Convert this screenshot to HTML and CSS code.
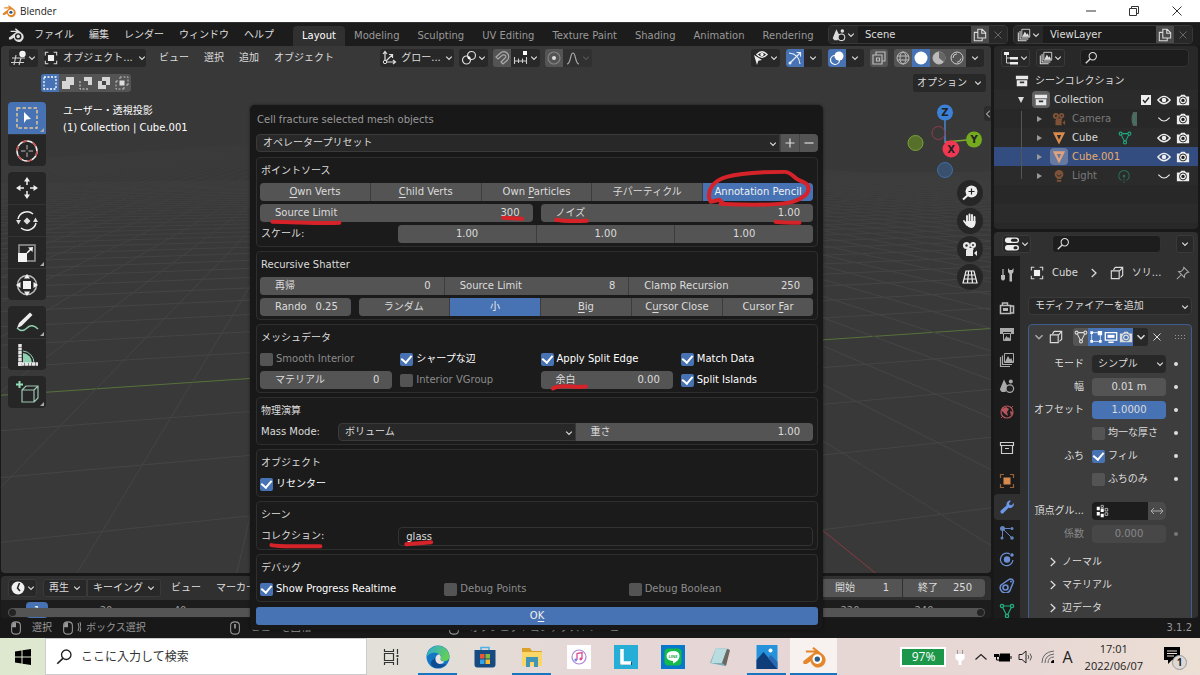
FILE: index.html
```html
<!DOCTYPE html>
<html lang="ja">
<head>
  <meta charset="UTF-8">
  <meta name="viewport" content="width=device-width, initial-scale=1.0">
  <title>Blender</title>
  <link rel="stylesheet" href="styles.css">
</head>
<body>

<!-- shared icons -->
<svg class="sprite" aria-hidden="true">
  <symbol id="down" viewBox="0 0 8 8"><path d="M1.2 2.6 4 5.4l2.8-2.8" fill="none" stroke="currentColor" stroke-width="1.2"/></symbol>
  <symbol id="right" viewBox="0 0 8 8"><path d="M2.2.8 5.6 4 2.2 7.2" fill="none" stroke="currentColor" stroke-width="1"/></symbol>
  <symbol id="cross" viewBox="0 0 8 8"><path d="m.5.5 7 7m0-7-7 7" stroke="currentColor" stroke-width="1"/></symbol>
  <symbol id="search" viewBox="0 0 16 16"><circle cx="10" cy="6" r="4.2" fill="none" stroke="currentColor" stroke-width="1.2"/><path d="M7 9.2 2 14" stroke="currentColor" stroke-width="1.5"/></symbol>
  <symbol id="blender" viewBox="0 0 16 16"><path d="M.8 10.8 8.2 5H2.6V3.7h6L6.8 2.3l1-1 5.6 4.5a5 5 0 1 1-7.6 5L3 12.6H1z" fill="currentColor"/><circle cx="10.2" cy="9.4" r="3.2" fill="var(--hole)"/><circle cx="10.2" cy="9.4" r="1.8" fill="var(--pupil)"/></symbol>
  <symbol id="copy" viewBox="0 0 16 16"><path d="M5.5 1.5h5l4 4v6h-9zM10 1.5V6h4.500M5.500 5H1.500v9.500h9v-3" fill="none" stroke="currentColor" stroke-width="1.2"/></symbol>
  <symbol id="scene" viewBox="0 0 16 16"><path d="M5 1.5 8.3 8 6.5 14H2.7L.8 11.6z" fill="currentColor"/><circle cx="11.8" cy="3.4" r="2" fill="currentColor"/><circle cx="10.8" cy="10.6" r="3.8" fill="#222" stroke="currentColor" stroke-width="1.2"/></symbol>
  <symbol id="images" viewBox="0 0 16 16"><path d="M1.5 5v9.5H11M3.5 3.5v9H13" fill="none" stroke="currentColor" stroke-width="1.2"/><path d="M5.5 1.5h9v9h-9z" fill="none" stroke="currentColor"/><path d="m6 10 3-6 2 3.5L12.200 6 14 10z" fill="currentColor"/></symbol>
  <symbol id="object" viewBox="0 0 16 16"><path d="M4.500 4.500h7v7h-7z" fill="var(--fill,#f0f0f0)"/><path d="M5 1.500H1.500V5M11 1.500h3.500V5M14.500 11v3.500H11M5 14.500H1.500V11" fill="none" stroke="currentColor" stroke-width="1.2"/></symbol>
  <symbol id="archive" viewBox="0 0 16 16"><path d="M1 2h14v4H1zM2 7h12v7H2z" fill="currentColor"/><path d="M5.500 8.500h5v2h-5z" fill="#333"/></symbol>
  <symbol id="eye" viewBox="0 0 16 16"><path d="M1 8q7-8.500 14 0-7 8.500-14 0z" fill="none" stroke="currentColor" stroke-width="1.500"/><circle cx="8" cy="8" r="2.600" fill="currentColor"/></symbol>
  <symbol id="closed" viewBox="0 0 16 16"><path d="M1.500 6.500q6.500 7.500 13 0" fill="none" stroke="currentColor" stroke-width="1.200"/></symbol>
  <symbol id="camera" viewBox="0 0 16 16"><path d="M1 4h3.500L6 2h4l1.500 2H15v10H1z" fill="currentColor"/><circle cx="8" cy="8.500" r="4" fill="none" stroke="var(--lens,#222)" stroke-width="1.100"/><circle cx="8" cy="8.500" r="1.900" fill="var(--lens,#222)"/></symbol>
  <symbol id="movie" viewBox="0 0 16 16"><circle cx="4.500" cy="4.500" r="3.500" fill="currentColor"/><circle cx="11" cy="4" r="3" fill="currentColor"/><path d="M4 9h7v6H4zM12 12l3-2.500v5.500zM4.500 7h7v2h-7z" fill="currentColor"/><circle cx="4.500" cy="4.500" r="1.200" fill="#2a2a2a"/><circle cx="11" cy="4" r="1" fill="#2a2a2a"/></symbol>
  <symbol id="mesh" viewBox="0 0 16 16"><path d="M1 1.500h14L8 15.500zM5.500 4.500 8 10l2.500-5.500z" fill-rule="evenodd" fill="currentColor"/></symbol>
  <symbol id="meshdata" viewBox="0 0 16 16"><path d="M3 3h10L8 13z" fill="none" stroke="currentColor" stroke-width="1.200"/><g fill="var(--node,#2a2a2a)" stroke="currentColor" stroke-width="1.200"><circle cx="3" cy="3" r="1.700"/><circle cx="13" cy="3" r="1.700"/><circle cx="8" cy="13" r="1.700"/></g></symbol>
  <symbol id="modicon" viewBox="0 0 16 16"><path d="M1.500 5.500h9v9h-9zM4 4.500 6 1.500h8.500v9L12 13M14.500 1.500 11 5.500" fill="none" stroke="currentColor" stroke-width="1.300"/></symbol>
  <symbol id="mouse" viewBox="0 0 16 16"><path d="M3 5q0-4 5-4t5 4v6q0 4-5 4t-5-4z" fill="none" stroke="currentColor" stroke-width="1.200"/><path d="M3.500 7V4Q4.500 1.500 8 1.500V7z" fill="currentColor"/></symbol>
  <symbol id="wheel" viewBox="0 0 16 16"><path d="M3 5q0-4 5-4t5 4v6q0 4-5 4t-5-4z" fill="none" stroke="currentColor" stroke-width="1.200"/><path d="M7 3.500h2v5H7z" fill="currentColor"/></symbol>
</svg>

<header class="titlebar">
  <svg class="i14 orange" aria-hidden="true"><use href="#blender"/></svg>
  <span class="caption">Blender</span>
  <button class="winbtn" aria-label="最小化"><svg class="i10" viewBox="0 0 10 10"><path d="M0 5h10" stroke="#333"/></svg></button>
  <button class="winbtn" aria-label="元に戻す"><svg class="i10" viewBox="0 0 10 10"><path d="M.5 2.500h7v7h-7zM2.500 2.500v-2h7v7h-2" fill="none" stroke="#333"/></svg></button>
  <button class="winbtn" aria-label="閉じる"><svg class="i10" viewBox="0 0 10 10"><path d="m.5.5 9 9m0-9-9 9" stroke="#333"/></svg></button>
</header>

<nav class="topbar">
  <svg class="i16 logo" aria-hidden="true"><use href="#blender"/></svg>
  <div class="menus">
    <button>ファイル</button><button>編集</button><button>レンダー</button><button>ウィンドウ</button><button>ヘルプ</button>
  </div>
  <div class="workspaces">
    <button class="active">Layout</button><button>Modeling</button><button>Sculpting</button><button>UV Editing</button><button>Texture Paint</button><button>Shading</button><button>Animation</button><button>Rendering</button>
  </div>
  <div class="idblock">
    <button class="icon" aria-label="シーン"><svg class="i14"><use href="#scene"/></svg><svg class="i8"><use href="#down"/></svg></button>
    <input type="text" value="Scene" aria-label="シーン名">
    <button class="light" aria-label="新規シーン"><svg class="i14"><use href="#copy"/></svg></button>
    <button class="off" aria-label="削除"><svg class="i8"><use href="#cross"/></svg></button>
  </div>
  <div class="idblock">
    <button class="icon" aria-label="ビューレイヤー"><svg class="i14"><use href="#images"/></svg><svg class="i8"><use href="#down"/></svg></button>
    <input type="text" value="ViewLayer" aria-label="レイヤー名">
    <button class="light" aria-label="新規レイヤー"><svg class="i14"><use href="#copy"/></svg></button>
    <button class="off" aria-label="削除"><svg class="i8"><use href="#cross"/></svg></button>
  </div>
</nav>

<main class="editors">
  <div class="left">
    <section class="viewport">
      <svg class="floor" viewBox="1 46 990 527" preserveAspectRatio="xMinYMin slice" aria-hidden="true">
        <defs><linearGradient id="fade" x1="0" y1="0" x2="0" y2="1"><stop offset="0" stop-color="#383838"/><stop offset=".4" stop-color="#383838" stop-opacity=".9"/><stop offset="1" stop-color="#393939" stop-opacity="0"/></linearGradient></defs>
        <g id="grid"></g>
        <rect x="0" y="46" width="1400" height="230" fill="url(#fade)"/>
      </svg>

      <div class="viewhead">
        <button class="w pair" aria-label="エディタータイプ"><svg class="i16" viewBox="0 0 16 16"><path d="M1 8h13M0 12.500h13M5 5 3 15M10 8 8 15" stroke="#d0d0d0" stroke-width="1.100"/><circle cx="11.500" cy="4" r="3.200" fill="#f2f2f2"/></svg><svg class="i8"><use href="#down"/></svg></button>
        <button class="w mode"><svg class="i14"><use href="#object"/></svg><span>オブジェクト...</span><svg class="i8"><use href="#down"/></svg></button>
        <div class="menus view"><button>ビュー</button><button>選択</button><button>追加</button><button>オブジェクト</button></div>
        <div class="group transform">
          <button class="w orient"><svg class="i16" viewBox="0 0 16 16"><path d="M4 2v10h10M4 12l7-7M2 4l2-2.500L6 4M12 10l2.500 2-2.500 2M8 4.500h3.500V8" fill="none" stroke="#ddd" stroke-width="1.200"/><circle cx="4" cy="12" r="1.700" fill="#282828" stroke="#ddd"/></svg><span>グロー...</span><svg class="i8"><use href="#down"/></svg></button>
          <button class="w pair" aria-label="ピボット"><svg class="i16" viewBox="0 0 16 16"><circle cx="5.500" cy="10" r="4" fill="none" stroke="#ddd" stroke-width="1.200"/><circle cx="10.500" cy="5.500" r="4" fill="none" stroke="#ddd" stroke-width="1.200"/><circle cx="8" cy="8" r="1.300" fill="#fff"/></svg><svg class="i8"><use href="#down"/></svg></button>
          <div class="joined">
            <button class="w gray" aria-label="スナップ"><svg class="i16" viewBox="0 0 16 16"><path d="m2 7 5-4.500q4-2 6.500 1t0 6.500L9 14l-2-2 4-4q1.500-1.600.4-2.600T8.500 5L4 9z" fill="none" stroke="#aaa" stroke-width="1.200"/></svg></button>
            <button class="w pair" aria-label="スナップ先"><svg class="i16" viewBox="0 0 16 16"><path d="M1.500 7v7M5.500 8.500V13M9.500 8.500V13M13.500 7v7M1.500 11h12" stroke="#ccc" stroke-width="1.100"/><path d="M10 1h4v4h-4z" fill="#fff"/></svg><svg class="i8"><use href="#down"/></svg></button>
          </div>
          <div class="joined">
            <button class="w gray" aria-label="プロポーショナル編集"><svg class="i16" viewBox="0 0 16 16"><circle cx="8" cy="8" r="6" fill="none" stroke="#828282" stroke-width="1.200"/><circle cx="8" cy="8" r="2" fill="#ddd"/></svg></button>
            <button class="w pair dim" aria-label="減衰"><svg class="i16" viewBox="0 0 16 16"><path d="M2 14c4 0 3-11 6-11s2 11 6 11" fill="none" stroke="#aaa" stroke-width="1.200"/></svg><svg class="i8 faint"><use href="#down"/></svg></button>
          </div>
        </div>
        <div class="group display">
          <button class="w pair" aria-label="可視性"><svg class="i16" viewBox="0 0 16 16"><path d="M4 4.500q5-5.500 10 0-5 5.500-10 0z" fill="none" stroke="#eee" stroke-width="1.500"/><circle cx="9" cy="4.500" r="1.700" fill="#eee"/><path d="m1 5 8 5-3.700.8L4 15z" fill="#eee"/></svg><svg class="i8"><use href="#down"/></svg></button>
          <div class="joined">
            <button class="w blue" aria-label="ギズモ"><svg class="i16" viewBox="0 0 16 16"><path d="M2 3q10 1 11 11M3 13 13 3M9.500 2.500h4v4" fill="none" stroke="#e8eefc" stroke-width="1.200"/><circle cx="3" cy="13" r="1.500" fill="#e8eefc"/></svg></button>
            <button class="w" aria-label="ギズモ設定"><svg class="i8"><use href="#down"/></svg></button>
          </div>
          <div class="joined">
            <button class="w blue" aria-label="オーバーレイ"><svg class="i16" viewBox="0 0 16 16"><circle cx="10" cy="6" r="4.500" fill="#fff"/><circle cx="6" cy="10" r="4.500" fill="none" stroke="#fff" stroke-width="1.200"/></svg></button>
            <button class="w" aria-label="オーバーレイ設定"><svg class="i8"><use href="#down"/></svg></button>
          </div>
          <button class="w gray" aria-label="透過"><svg class="i16" viewBox="0 0 16 16"><path d="M2 5h9v9H2zM5 5V2h9v9h-3M5.500 8h3v3h-3z" fill="none" stroke="#bbb" stroke-width="1.200"/></svg></button>
          <div class="joined">
            <button class="w gray" aria-label="ワイヤーフレーム"><svg class="i16" viewBox="0 0 16 16"><circle cx="8" cy="8" r="6" fill="none" stroke="#bbb"/><ellipse cx="8" cy="8" rx="3" ry="6" fill="none" stroke="#bbb"/><path d="M2 6h12M2 10h12" stroke="#bbb"/></svg></button>
            <button class="w blue" aria-label="ソリッド"><svg class="i16" viewBox="0 0 16 16"><circle cx="8" cy="8" r="6.500" fill="#fff"/></svg></button>
            <button class="w gray" aria-label="マテリアル"><svg class="i16" viewBox="0 0 16 16"><circle cx="8" cy="8" r="6" fill="#bbb" stroke="#bbb"/><path d="M8 2v6l5 4A6 6 0 0 0 8 2z" fill="#666"/></svg></button>
            <button class="w gray" aria-label="レンダー"><svg class="i16" viewBox="0 0 16 16"><circle cx="8" cy="8" r="6" fill="none" stroke="#ccc"/><path d="M4 8q0-4 4-4.200M12 8.500Q11.500 12 8 12.300" fill="none" stroke="#ccc"/></svg></button>
            <button class="w" aria-label="シェーディング設定"><svg class="i8"><use href="#down"/></svg></button>
          </div>
        </div>
      </div>

      <div class="toolhead">
        <div class="joined selectmodes">
          <button class="w blue" aria-label="新規"><svg class="i16" viewBox="0 0 16 16"><path d="M2 2h12v12H2z" fill="none" stroke="#fff" stroke-width="1.300" stroke-dasharray="2 1.500"/></svg></button>
          <button class="w gray" aria-label="拡張"><svg class="i16" viewBox="0 0 16 16"><path d="M6 2h8v8h-4v4H2V6h4z" fill="#d5d5d5"/></svg></button>
          <button class="w gray" aria-label="減算"><svg class="i16" viewBox="0 0 16 16"><path d="M6 2h8v8h-4V6H6z" fill="#d5d5d5"/><path d="M2 6v8h8" fill="none" stroke="#d5d5d5" stroke-dasharray="2 1.500"/></svg></button>
          <button class="w gray" aria-label="差分"><svg class="i16" viewBox="0 0 16 16"><path d="M6 2h8v8h-4v4H2V6h4z" fill="#d5d5d5"/><path d="M6 6h4v4H6z" fill="#444"/></svg></button>
          <button class="w gray" aria-label="交差"><svg class="i16" viewBox="0 0 16 16"><path d="M2 6v8h8M6 2h8v8M2 6h3M6 2v3M10 14v-3M14 10h-3" fill="none" stroke="#bbb" stroke-dasharray="2 1.500"/><path d="M5.500 5.500h5v5h-5z" fill="#ddd"/></svg></button>
        </div>
        <button class="w options"><span>オプション</span><svg class="i8"><use href="#down"/></svg></button>
      </div>

      <div class="stage">
        <div class="toolbar">
          <div class="tools">
            <button class="on corner" aria-label="選択"><svg class="i24" viewBox="0 0 24 24"><path d="M2 2h20v20H2z" fill="none" stroke="#e3c799" stroke-width="1.500" stroke-dasharray="3.500 2"/><path d="m9 6 7 7-4.500.5L9 17z" fill="#fff"/></svg></button>
            <button aria-label="カーソル"><svg class="i24" viewBox="0 0 24 24"><circle cx="12" cy="12" r="10" fill="none" stroke="#eee" stroke-width="1.500"/><circle cx="12" cy="12" r="10" fill="none" stroke="#c54a4a" stroke-width="1.500" stroke-dasharray="5 5.500"/><path d="M12 6v4.500M12 13.500V18M6 12h4.500M13.500 12H18" stroke="#bbb"/></svg></button>
          </div>
          <div class="tools">
            <button aria-label="移動"><svg class="i24" viewBox="0 0 24 24"><path d="m12 1 3 4.500H9zM12 23l3-4.500H9zM1 12l4.500-3v6zM23 12l-4.500-3v6z" fill="#eee"/><path d="M12 5v4M12 15v4M5 12h4M15 12h4" stroke="#eee" stroke-width="1.500"/></svg></button>
            <button aria-label="回転"><svg class="i24" viewBox="0 0 24 24"><path d="M3 10a9.300 9.300 0 0 1 15-5M21 14a9.300 9.300 0 0 1-15 5" fill="none" stroke="#eee" stroke-width="1.500"/><path d="M1 11h5l-2.500 4.500zM18 13h5l-2.500-4.500zM12 8.500l3.500 3.500-3.500 3.500L8.500 12z" fill="#ddd"/></svg></button>
            <button class="corner" aria-label="スケール"><svg class="i24" viewBox="0 0 24 24"><path d="M4 12V4h16v16h-8" fill="none" stroke="#999" stroke-width="1.500"/><path d="M3 12h9v9H3zM18 6l-.5 5-4.500-4.500z" fill="#f2f2f2"/><path d="m12 12 4-4" stroke="#fff" stroke-width="1.500"/></svg></button>
            <button aria-label="トランスフォーム"><svg class="i24" viewBox="0 0 24 24"><circle cx="12" cy="12" r="9.500" fill="none" stroke="#bbb" stroke-width="1.500"/><path d="M8 8h8v8H8zM12 1l3 4.500H9zM12 23l3-4.500H9zM1 12l4.500-3v6zM23 12l-4.500-3v6z" fill="#f2f2f2"/></svg></button>
          </div>
          <div class="tools">
            <button class="corner" aria-label="アノテート"><svg class="i24" viewBox="0 0 24 24"><path d="M15 2.500 4 13l-2 5 4.500-2L17.500 5z" fill="#eee"/><path d="M2 18q5 5 10 0t11 1" fill="none" stroke="#8fd0b0" stroke-width="1.500"/></svg></button>
            <button aria-label="メジャー"><svg class="i24" viewBox="0 0 24 24"><path d="M8 20V10a10 10 0 0 1 9 10z" fill="#8fd0b0"/><path d="M8 8a12 12 0 0 1 11 12" fill="none" stroke="#8fd0b0"/><path d="M5 1v22M3 21h20" stroke="#e5e5e5" stroke-width="3.500" stroke-dasharray="3 .5"/></svg></button>
          </div>
          <div class="tools">
            <button class="corner" aria-label="立方体を追加"><svg class="i24" viewBox="0 0 24 24"><path d="M7 10h12v12H7zM7 10l4-4h12v12l-4 4M19 10l4-4" fill="none" stroke="#9cc4b0" stroke-width="1.200"/><path d="M4.500 1v7M1 4.500h7" stroke="#92dcb6" stroke-width="2"/></svg></button>
          </div>
        </div>
        <div class="viewinfo">ユーザー・透視投影<br>(1) Collection | Cube.001</div>
        <div class="navigate">
          <svg class="gizmo" viewBox="902 102 82 78">
            <path d="M945 120v23" stroke="#4a86cc" stroke-width="1.500"/><path d="m945 142 22-2" stroke="#7fae2c" stroke-width="1.500"/><path d="m946 141 5 8" stroke="#f23a58" stroke-width="1.500"/>
            <circle cx="938.500" cy="133" r="6.500" fill="none" stroke="#8f3d4c"/>
            <circle cx="915.500" cy="143" r="7.500" fill="#56702b" stroke="#7ba332"/>
            <circle cx="945" cy="170" r="7.500" fill="#39506c" stroke="#3a6fab"/>
            <circle cx="945" cy="112.500" r="8" fill="#3b81d8"/><circle cx="974" cy="139.500" r="8" fill="#75aa1f"/><circle cx="951" cy="149" r="8.500" fill="#f23753"/>
            <g class="axis"><text x="945" y="116">Z</text><text x="974" y="143">Y</text><text x="951" y="153">X</text></g>
          </svg>
          <div class="navbtns">
            <button aria-label="ズーム"><svg class="i16" viewBox="0 0 16 16"><circle cx="9.500" cy="6.500" r="6" fill="#eee"/><path d="M6 10 1 14.500" stroke="#eee" stroke-width="2"/><path d="M9.500 3.500v6M6.500 6.500h6" stroke="#222" stroke-width="1.200"/></svg></button>
            <button aria-label="移動"><svg class="i16" viewBox="0 0 16 16"><path d="M5 9V3M7.500 8V1.500M10 8V2M12.500 9V4M2 8l3 4" stroke="#eee" stroke-width="1.900" stroke-linecap="round"/><path d="M4 8h9.500v2.500Q12.500 15 9 15q-2.500 0-5-3.500z" fill="#eee"/></svg></button>
            <button aria-label="カメラ"><svg class="i16 white"><use href="#movie"/></svg></button>
            <button aria-label="透視投影"><svg class="i16" viewBox="0 0 16 16"><path d="M4 2h8l3 12H1zM2.800 6h10.400M2 10h12M6.600 2 5.500 14M9.400 2l1.100 12" fill="none" stroke="#eee" stroke-width="1.200"/></svg></button>
          </div>
        </div>
        <button class="npanel" aria-label="サイドバー"><svg class="i8 flip"><use href="#right"/></svg></button>
      </div>
    </section>

    <section class="timeline">
      <div class="timehead">
        <button class="w pair outlined" aria-label="タイムライン"><svg class="i16" viewBox="0 0 16 16"><circle cx="8" cy="8" r="6.500" fill="#f0f0f0"/><path d="M9.500 3 7.500 8l2.500 3" fill="none" stroke="#222" stroke-width="1.500"/></svg><svg class="i8"><use href="#down"/></svg></button>
        <div class="joined playback">
          <button class="w outlined"><span>再生</span><svg class="i8"><use href="#down"/></svg></button>
          <button class="w outlined"><span>キーイング</span><svg class="i8"><use href="#down"/></svg></button>
        </div>
        <div class="menus"><button>ビュー</button><button>マーカー</button></div>
        <div class="joined range">
          <label class="field"><span>開始</span><input type="text" value="1"></label>
          <label class="field"><span>終了</span><input type="text" value="250"></label>
        </div>
      </div>
      <div class="ruler">
        <span class="now">1</span><span>20</span><span>40</span><span class="late">220</span><span>240</span>
        <div class="scroll"></div>
      </div>
    </section>
  </div>

  <aside class="right">
    <section class="outliner">
      <div class="sidehead">
        <button class="w pair outlined" aria-label="アウトライナー"><svg class="i16" viewBox="0 0 16 16"><path d="M1 2h5v3H1zM7 7h8v2.500H7zM7 12h8v2.500H7z" fill="#eee"/><path d="M3.500 5v8H7M3.500 8H7" fill="none" stroke="#ccc"/></svg><svg class="i8"><use href="#down"/></svg></button>
        <button class="w pair outlined" aria-label="表示モード"><svg class="i14"><use href="#images"/></svg><svg class="i8"><use href="#down"/></svg></button>
        <label class="find"><svg class="i14"><use href="#search"/></svg><input type="search" aria-label="検索"></label>
      </div>
      <ul class="tree">
        <li class="root"><svg class="i14 white"><use href="#archive"/></svg><span>シーンコレクション</span></li>
        <li class="coll"><i class="tri open"></i><b class="chip"><svg class="i14 white"><use href="#archive"/></svg></b><span>Collection</span>
          <em><svg class="i12" viewBox="0 0 12 12"><path d="M1 1h10v10H1z" fill="#eee"/><path d="m3 6 2 2.500L9 3.500" fill="none" stroke="#222" stroke-width="1.300"/></svg><svg class="i14"><use href="#eye"/></svg><svg class="i14"><use href="#camera"/></svg></em></li>
        <li class="child muted"><i class="tri"></i><b><svg class="i14 brown"><use href="#movie"/></svg></b><span>Camera</span><svg class="i14 data cut" viewBox="0 0 14 14"><path d="M10 0h4v14h-4q-3-7 0-14z" fill="#56605c"/><path d="M14 3h-3v8h3" fill="none" stroke="#2b8569"/></svg>
          <em><svg class="i14"><use href="#closed"/></svg><svg class="i14"><use href="#camera"/></svg></em></li>
        <li class="child"><i class="tri"></i><b><svg class="i14 amber"><use href="#mesh"/></svg></b><span>Cube</span><svg class="i14 data green"><use href="#meshdata"/></svg>
          <em><svg class="i14"><use href="#eye"/></svg><svg class="i14"><use href="#camera"/></svg></em></li>
        <li class="child selected"><i class="tri"></i><b class="chip"><svg class="i14 amber"><use href="#mesh"/></svg></b><span>Cube.001</span>
          <em><svg class="i14"><use href="#eye"/></svg><svg class="i14"><use href="#camera"/></svg></em></li>
        <li class="child muted"><i class="tri"></i><b><svg class="i14 brown" viewBox="0 0 16 16"><circle cx="8" cy="6" r="5" fill="currentColor"/><path d="M5.500 10h5v4.500h-5z" fill="currentColor"/><path d="M5.500 6 7 8h2l1.500-2M5.500 12h5" fill="none" stroke="#2a2a2a"/></svg></b><span>Light</span><svg class="i14 data green" viewBox="0 0 16 16"><path d="M5 13a6 6 0 1 1 6 0" fill="none" stroke="#27705a" stroke-width="1.200"/><circle cx="8" cy="8" r="1.500" fill="#27705a"/><path d="M8 8v8" stroke="#27705a" stroke-dasharray="2 1"/></svg>
          <em><svg class="i14"><use href="#closed"/></svg><svg class="i14"><use href="#camera"/></svg></em></li>
        <li></li><li></li>
      </ul>
    </section>

    <section class="properties">
      <div class="sidehead props">
        <button class="w pair outlined" aria-label="プロパティ"><svg class="i16" viewBox="0 0 16 16"><rect x="1" y="1.500" width="14" height="5.500" rx="2.700" fill="#eee"/><rect x="1" y="9" width="14" height="5.500" rx="2.700" fill="#eee"/><rect x="7" y="2.700" width="6.500" height="3" rx="1.500" fill="#222"/><rect x="9.500" y="10.200" width="4" height="3" rx="1.500" fill="#222"/></svg><svg class="i8"><use href="#down"/></svg></button>
        <label class="find"><svg class="i14"><use href="#search"/></svg><input type="search" aria-label="プロパティ検索"></label>
        <button class="w outlined" aria-label="オプション"><svg class="i8"><use href="#down"/></svg></button>
      </div>
      <div class="propbody">
        <div class="tabs">
          <button aria-label="ツール"><svg class="i16" viewBox="0 0 16 16"><path d="M4 2v6" stroke="#bbb" stroke-width="1.200"/><path d="M2 8h4v4q-2 3-4 0zM9 1v4l1.500 2v7.500h2.500V7L14.500 5V1l-1.500 2h-2.500z" fill="#bbb"/></svg></button>
          <button class="gap" aria-label="レンダー"><svg class="i16" viewBox="0 0 16 16"><path d="M1.500 5.500h10v8h-10zM11.500 6h3v7h-3M3.500 5V3h5v2" fill="none" stroke="#bbb" stroke-width="1.500"/><path d="M4 8h5v3H4z" fill="#bbb"/></svg></button>
          <button aria-label="出力"><svg class="i16" viewBox="0 0 16 16"><path d="M1 2h14v6h-3V6H4v2H1z" fill="#aaa"/><path d="M4.500 7.500h7v7h-7z" fill="none" stroke="#aaa"/><path d="m5 14 2.500-4 1.500 2 1-1 1.500 3z" fill="#aaa"/></svg></button>
          <button aria-label="ビューレイヤー"><svg class="i16 soft"><use href="#images"/></svg></button>
          <button aria-label="シーン"><svg class="i16 soft"><use href="#scene"/></svg></button>
          <button aria-label="ワールド"><svg class="i16" viewBox="0 0 16 16"><circle cx="8" cy="8" r="6" fill="none" stroke="#b5545c" stroke-width="1.200"/><path d="m3 5 4-2 3 2-2 3 1 4-3-2-3-3zM11 7l3 1-2 4z" fill="#b5545c"/><path d="m12 4 2-2M4 12l-2 2" stroke="#b5545c"/></svg></button>
          <button class="gap2" aria-label="コレクション"><svg class="i16" viewBox="0 0 16 16"><path d="M1.500 2.500h13v3h-13zM2.500 5.500h11v8h-11zM6 8.500h4" fill="none" stroke="#ccc" stroke-width="1.200"/></svg></button>
          <button class="gap" aria-label="オブジェクト"><svg class="i16 objtab"><use href="#object"/></svg></button>
          <button class="current" aria-label="モディファイアー"><svg class="i16" viewBox="0 0 16 16"><path d="m2 14.500-.7-2.500 6.200-5.500Q7 3 10 1.500l2 .2-2 2.500.7 1.700 1.900.4L15 4q.3 3.500-2.500 4.800-1.500.5-3 0L4 14.500z" fill="#6b97e8"/></svg></button>
          <button aria-label="パーティクル"><svg class="i16" viewBox="0 0 16 16"><path d="M3.500 3.500h8M3.500 3.500V12M4 4l9 9" stroke="#6585c0"/><circle cx="3.500" cy="3.500" r="2.500" fill="#6585c0"/><circle cx="13" cy="3.500" r="1.500" fill="#6585c0"/><circle cx="3" cy="13" r="1.500" fill="#6585c0"/><circle cx="13" cy="13" r="1.800" fill="#6585c0"/></svg></button>
          <button aria-label="物理演算"><svg class="i16" viewBox="0 0 16 16"><circle cx="8" cy="8.500" r="3.200" fill="#6b8fd6"/><path d="M11 3A6.300 6.300 0 1 0 14 9" fill="none" stroke="#6b8fd6" stroke-width="1.200"/><circle cx="13" cy="4" r="1.700" fill="#6b8fd6"/></svg></button>
          <button aria-label="コンストレイント"><svg class="i16" viewBox="0 0 16 16"><path d="M2 8 10.500 2.200q3.500-1 4 2.500L11 13.500A5 5 0 0 1 2 8z" fill="none" stroke="#6b8fd6" stroke-width="1.500"/><circle cx="6.500" cy="10.500" r="2.500" fill="none" stroke="#6b8fd6" stroke-width="1.600"/><circle cx="12" cy="4.500" r="1" fill="#6b8fd6"/></svg></button>
          <button aria-label="データ"><svg class="i16 green"><use href="#meshdata"/></svg></button>
        </div>
        <div class="content">
          <div class="crumb"><svg class="i14"><use href="#object"/></svg><span>Cube</span><svg class="i10"><use href="#right"/></svg><svg class="i14"><use href="#modicon"/></svg><span>ソリ...</span><svg class="i14 pin" viewBox="0 0 16 16"><path d="m9 1.500 5.500 5.500-2 .5L10 10l-.5 3L3 6.500 6 6l2.500-2.500zM6 10l-5 5" fill="none" stroke="#aaa" stroke-width="1.200"/></svg></div>
          <div class="drop add"><select aria-label="モディファイアーを追加"><option>モディファイアーを追加</option></select><svg class="i8"><use href="#down"/></svg></div>
          <div class="panel">
            <div class="panelhead">
              <svg class="i10 soft"><use href="#down"/></svg><svg class="i14 kind"><use href="#modicon"/></svg>
              <div class="joined flags">
                <button class="w gray" aria-label="ケージ"><svg class="i14 cage"><use href="#meshdata"/></svg></button>
                <button class="w blue" aria-label="編集モード"><svg class="i14" viewBox="0 0 16 16"><path d="M3 3h10v10H3z" fill="none" stroke="#dfe8fa"/><path d="M1.500 1.500h3v3h-3zM1.500 11.500h3v3h-3zM11.500 11.500h3v3h-3zM10 1h5v5h-5z" fill="#fff"/></svg></button>
                <button class="w blue" aria-label="リアルタイム"><svg class="i14" viewBox="0 0 16 16"><path d="M1.500 3h13v8.500h-13zM5 14h6" fill="none" stroke="#fff" stroke-width="1.500"/><path d="M4 5.500h8V9H4z" fill="#fff"/></svg></button>
                <button class="w blue" aria-label="レンダー"><svg class="i14 render"><use href="#camera"/></svg></button>
                <button class="w" aria-label="メニュー"><svg class="i10"><use href="#down"/></svg></button>
              </div>
              <button class="plain" aria-label="削除"><svg class="i8"><use href="#cross"/></svg></button>
              <svg class="grip" viewBox="0 0 10 4"><path d="M0 .5h10M0 3.500h10" stroke="#999" stroke-dasharray="1 2"/></svg>
            </div>
            <div class="prow"><label for="m-mode">モード</label><div class="drop"><select id="m-mode"><option>シンプル</option></select><svg class="i8"><use href="#down"/></svg></div><i class="dot"></i></div>
            <div class="prow"><label for="m-thick">幅</label><input id="m-thick" class="num" type="text" value="0.01 m"><i class="dot"></i></div>
            <div class="prow"><label for="m-off">オフセット</label><input id="m-off" class="num hot" type="text" value="1.0000"><i class="dot"></i></div>
            <div class="prow"><span></span><label class="check"><input type="checkbox">均一な厚さ</label><i class="dot"></i></div>
            <div class="prow"><span>ふち</span><label class="check"><input type="checkbox" checked>フィル</label><i class="dot"></i></div>
            <div class="prow"><span></span><label class="check"><input type="checkbox">ふちのみ</label><i class="dot"></i></div>
            <div class="prow vgroup"><label for="m-vg">頂点グル...</label><div class="vg"><svg class="i14" viewBox="0 0 16 16"><path d="M2 3h3.500v4H2zM2 9h3.500v4H2zM6.500 5H10v4H6.500zM6.500 11H10v4H6.500z" fill="#fff"/><path d="M7 1.500h2.500v2.500H7zM11.500 5h3v3h-3zM11.500 10h3v3h-3z" fill="none" stroke="#bbb"/></svg><input id="m-vg" type="text"><button aria-label="反転"><svg class="i14" viewBox="0 0 14 14"><path d="M1 7h12M4 4 1 7l3 3M10 4l3 3-3 3" fill="none" stroke="#aaa"/></svg></button></div><i></i></div>
            <div class="prow muted"><label for="m-fac">係数</label><input id="m-fac" class="num" type="text" value="0.000" disabled><i class="dot"></i></div>
            <div class="subs">
              <button><svg class="i10"><use href="#right"/></svg>ノーマル</button>
              <button><svg class="i10"><use href="#right"/></svg>マテリアル</button>
              <button><svg class="i10"><use href="#right"/></svg>辺データ</button>
            </div>
          </div>
        </div>
      </div>
    </section>
  </aside>
</main>

<footer class="statusbar">
  <span class="hint"><svg class="i14"><use href="#mouse"/></svg>選択</span>
  <span class="hint drag"><svg class="i14"><use href="#mouse"/></svg><svg class="wave" viewBox="0 0 4 14"><path d="M1 2q2 4 0 8M3 1q2 5 0 10" fill="none" stroke="currentColor"/></svg>ボックス選択</span>
  <span class="hint rotate"><svg class="i14"><use href="#wheel"/></svg>ビューを回転</span>
  <span class="hint context"><svg class="i14"><use href="#mouse"/></svg>オブジェクトコンテクストメニュー</span>
  <span class="version">3.1.2</span>
</footer>

<form class="popup">
  <h1>Cell fracture selected mesh objects</h1>
  <div class="joined preset">
    <div class="drop"><select aria-label="プリセット"><option>オペレータープリセット</option></select><svg class="i8"><use href="#down"/></svg></div>
    <button type="button" aria-label="追加"><svg class="i10" viewBox="0 0 10 10"><path d="M5 .5v9M.5 5h9" stroke="#ddd" stroke-width="1.200"/></svg></button>
    <button type="button" aria-label="削除"><svg class="i10" viewBox="0 0 10 10"><path d="M.5 5h9" stroke="#ddd" stroke-width="1.200"/></svg></button>
  </div>

  <fieldset>
    <h2>ポイントソース</h2>
    <div class="seg">
      <button type="button"><u>O</u>wn Verts</button><button type="button"><u>C</u>hild Verts</button><button type="button">Own <u>P</u>articles</button><button type="button">子パーティクル</button><button type="button" class="on">Annotation Pencil</button>
    </div>
    <div class="cols">
      <label class="field"><span>Source Limit</span><input type="text" value="300"></label>
      <label class="field"><span>ノイズ</span><input type="text" value="1.00"></label>
    </div>
    <div class="line quarter">
      <span>スケール:</span>
      <div class="seg"><input type="text" value="1.00" aria-label="X"><input type="text" value="1.00" aria-label="Y"><input type="text" value="1.00" aria-label="Z"></div>
    </div>
  </fieldset>

  <fieldset>
    <h2>Recursive Shatter</h2>
    <div class="seg">
      <label class="field"><span>再帰</span><input type="text" value="0"></label>
      <label class="field"><span>Source Limit</span><input type="text" value="8"></label>
      <label class="field"><span>Clamp Recursion</span><input type="text" value="250"></label>
    </div>
    <div class="line random">
      <label class="field"><span>Rando</span><input type="text" value="0.25"></label>
      <div class="seg"><button type="button">ランダム</button><button type="button" class="on">小</button><button type="button"><u>B</u>ig</button><button type="button">C<u>u</u>rsor Close</button><button type="button">Cursor <u>F</u>ar</button></div>
    </div>
  </fieldset>

  <fieldset>
    <h2>メッシュデータ</h2>
    <div class="cols four">
      <label class="check"><input type="checkbox">Smooth Interior</label>
      <label class="check"><input type="checkbox" checked>シャープな辺</label>
      <label class="check"><input type="checkbox" checked>Apply Split Edge</label>
      <label class="check"><input type="checkbox" checked>Match Data</label>
      <label class="field"><span>マテリアル</span><input type="text" value="0"></label>
      <label class="check"><input type="checkbox">Interior VGroup</label>
      <label class="field"><span>余白</span><input type="text" value="0.00"></label>
      <label class="check"><input type="checkbox" checked>Split Islands</label>
    </div>
  </fieldset>

  <fieldset>
    <h2>物理演算</h2>
    <div class="line mass">
      <label for="massmode">Mass Mode:</label>
      <div class="joined halves">
        <div class="drop"><select id="massmode"><option>ボリューム</option></select><svg class="i8"><use href="#down"/></svg></div>
        <label class="field"><span>重さ</span><input type="text" value="1.00"></label>
      </div>
    </div>
  </fieldset>

  <fieldset>
    <h2>オブジェクト</h2>
    <label class="check"><input type="checkbox" checked>リセンター</label>
  </fieldset>

  <fieldset>
    <h2>シーン</h2>
    <div class="line quarter"><label for="coll">コレクション:</label><input id="coll" class="text" type="text" value="glass"></div>
  </fieldset>

  <fieldset>
    <h2>デバッグ</h2>
    <div class="cols three">
      <label class="check"><input type="checkbox" checked>Show Progress Realtime</label>
      <label class="check"><input type="checkbox">Debug Points</label>
      <label class="check"><input type="checkbox">Debug Boolean</label>
    </div>
  </fieldset>

  <button type="button" class="ok">O<u>K</u></button>

  <!-- red pen marks -->
  <svg class="marks" viewBox="250 105 573 526" aria-hidden="true">
    <path d="M710 200c-3-9 3-19 17-23 14-4 41-5 58-5 7 0 9 6 14 8 5 2 10 4 10 9 0 5-6 10-16 13-15 4-50 3-72 2"/>
    <path d="m711 202 9-2 3 3"/>
    <path d="M272 222c20 0 48 2 67 1M503 218l19 1M556 220c11 2 22 1 31 1M776 222c9 1 15 1 24 1M553 389c10-5 20 0 33-2M271 546c7 2 27 1 49 1M406 545l25-2"/>
  </svg>
</form>

<footer class="taskbar">
  <button class="start" aria-label="スタート"><svg class="i16" viewBox="0 0 16 16"><path d="m0 2.500 6.500-1V7.500H0zM7.500 1.300 16 0v7.500H7.500zM0 8.500h6.500v6L0 13.500zM7.500 8.500H16V16l-8.500-1.300z"/></svg></button>
  <label class="winsearch"><svg class="i18"><use href="#search"/></svg><input type="text" placeholder="ここに入力して検索" aria-label="検索"></label>
  <div class="apps">
    <button aria-label="タスクビュー"><svg class="i20" viewBox="0 0 20 20"><path d="M3.500 6.500h9v7h-9zM3.500 2v2.500h9V2M3.500 18v-2.500h9V18M16.500 2v5M16.500 11v7" fill="none" stroke="#333" stroke-width="1.200"/><path d="M15.500 8h2v2h-2z" fill="#333"/></svg></button>
    <button class="run" aria-label="Edge"><svg class="i24" viewBox="0 0 24 24"><defs><linearGradient id="eg" x1="0" x2="1" y1="0" y2=".4"><stop offset="0" stop-color="#2ba8dd"/><stop offset="1" stop-color="#62cf58"/></linearGradient></defs><circle cx="12" cy="12" r="11.500" fill="#1377c4"/><path d="M.8 10A11.500 11.500 0 0 1 23.500 11q0 5-5 5-4.500 0-4-2 1-1.500 0-3.500Q11 6.500 6 8q-4 1-5.200 4z" fill="url(#eg)"/><path d="M9 13q0 8 11 6-6 6-13 3Q2 17 9 13z" fill="#0e4b91"/><path d="M9.500 13q1-4 4-3.500 2 2 1 4.500-.5 2 4 2.500-1.500 2.500-5 2.500-4.500-1-4-6z" fill="#e9e1df"/></svg></button>
    <button aria-label="Store"><svg class="i24" viewBox="0 0 24 24"><path d="M8 6V2.500h8V6" fill="none" stroke="#4ab3e8" stroke-width="1.500"/><path d="M1.500 5h21v14.500q0 3-3 3h-15q-3 0-3-3z" fill="#164a80"/><path d="M7 9h4.500v4.500H7z" fill="#ee5533"/><path d="M12.500 9H17v4.500h-4.500z" fill="#80bc3b"/><path d="M7 14.500h4.500V19H7z" fill="#31a6e8"/><path d="M12.500 14.500H17V19h-4.500z" fill="#fdbb2d"/></svg></button>
    <button class="run" aria-label="エクスプローラー"><svg class="i24" viewBox="0 0 24 24"><path d="M2 3h8l2 3h10v15H2z" fill="#dba22b"/><path d="M2 7h20v14H2z" fill="#fbd768"/><path d="M6 12h12v10h-4v-5h-4v5H6z" fill="#4395b8"/></svg></button>
    <button aria-label="iTunes"><svg class="i24" viewBox="0 0 24 24"><path d="M0 0h24v24H0z" fill="#fff"/><circle cx="12" cy="12" r="7" fill="none" stroke="#ac84d8" stroke-width="1.200"/><path d="M10 15V8.500L15 7.500v6.500" fill="none" stroke="#d84c94" stroke-width="1.300"/><circle cx="8.800" cy="15" r="1.400" fill="#6b8ae0"/><circle cx="13.800" cy="14" r="1.400" fill="#d84c94"/></svg></button>
    <button aria-label="L"><svg class="i24" viewBox="0 0 24 24"><path d="M0 0h24v24H0z" fill="#27aed6"/><path d="M6 18v2h12v-3z" fill="#0f557b"/><path d="M8 4v14h9" fill="none" stroke="#fff" stroke-width="3.500"/></svg></button>
    <button aria-label="LINE"><svg class="i24" viewBox="0 0 24 24"><path d="M0 0h24v24H0z" fill="#0878cb"/><rect x="3.500" y="3.500" width="17" height="17" rx="4" fill="#13bb4b"/><path d="M12 6q6.500 0 6.500 5T12 18.500V16q-6.500-.5-6.500-5T12 6z" fill="#fff"/><text class="line-logo" x="12" y="13">LINE</text></svg></button>
    <button aria-label="メモ帳"><svg class="i24" viewBox="0 0 24 24"><path d="M8 3 21 4l-4 17L2 18z" fill="#79aeb8"/><path d="m8 3 11 1-5 14H3z" fill="#b9dce0"/><path d="m19 4 3 1-4 16-4-3z" fill="#6c675f"/></svg></button>
    <button class="run" aria-label="フォト"><svg class="i24" viewBox="0 0 24 24"><path d="M1.500 0h21v24h-21z" fill="#2493dc"/><path d="m1.500 15 7-8 14 17h-21z" fill="#0e3d79"/><path d="m13 13 3-3 6.500 7v7z" fill="#2a69b2"/><circle cx="15.500" cy="5.500" r="2" fill="#fff"/></svg></button>
    <button class="run focus" aria-label="Blender"><svg class="i24 orange"><use href="#blender"/></svg></button>
  </div>
  <div class="tray">
    <span class="battery">97%</span>
    <svg class="i16 plug" viewBox="0 0 16 16"><path d="M5.500 1v4M10.500 1v4" stroke="#999"/><path d="M3.500 5h9v5L9.500 12v4h-3v-4l-3-2z" fill="#fff"/></svg>
    <svg class="i14" viewBox="0 0 14 14"><path d="m1.500 9.500 5.500-5 5.500 5" fill="none" stroke="#222" stroke-width="1.200"/></svg>
    <svg class="i18" viewBox="0 0 18 18"><path d="M6 5.500h10v8H5v-4z"/><path d="M16.500 8h1v3h-1zM1 3v4M4 3v4M0 6h5v3H0z"/><path d="M2.500 8v4h3" fill="none" stroke="#000"/></svg>
    <svg class="i16" viewBox="0 0 16 16"><path d="M1 5.500h3L8 2v12l-4-3.500H1z" fill="none" stroke="#222"/><path d="M10 6q1.500 2 0 4M12 4.500q3 3.500 0 7" fill="none" stroke="#555"/></svg>
    <svg class="i16 wifi" viewBox="0 0 16 16"><path d="M2 14Q2 3 14 2M5 14Q5 6 14 5M8 14q0-6 6-6" fill="none" stroke="#666"/><path d="M11 14q0-3 3-3v3z"/></svg>
    <span class="ime">A</span>
    <div class="clock">17:01<br>2022/06/07</div>
    <button class="notice" aria-label="通知"><svg class="i24" viewBox="0 0 24 24"><path d="M3 2h16v13H11l-4 4v-4H3z"/><path d="M6 6h10M6 8.500h10M6 11h7" stroke="#ece0da"/></svg><b>1</b></button>
  </div>
</footer>

<script src="script.js"></script>
</body>
</html>
```
FILE: styles.css
```css
* {
  box-sizing: border-box;
}
body {
  margin: 0;
  height: 100vh;
  display: flex;
  flex-direction: column;
  position: relative;
  overflow: hidden;
  background: #181818;
  color: #dcdcdc;
  font-family: "DejaVu Sans", "Noto Sans CJK JP", sans-serif;
  font-size: 10px;
  line-height: 18px;
}
button, input, select {
  font: inherit;
  color: inherit;
  background: none;
  border: 0;
  padding: 0;
  margin: 0;
  min-width: 0;
  outline: none;
}
button {
  white-space: nowrap;
}
svg {
  display: block;
  flex: none;
}
.sprite { position: absolute; width: 0; height: 0; }
.i8 { width: 8px; height: 8px; }
.i10 { width: 10px; height: 10px; }
.i12 { width: 12px; height: 12px; }
.i14 { width: 14px; height: 14px; }
.i16 { width: 16px; height: 16px; }
.i18 { width: 18px; height: 18px; }
.i20 { width: 20px; height: 20px; }
.i24 { width: 24px; height: 24px; }
.white { color: #e8e8e8; }
.soft { color: #aaa; }
.faint { color: #555; }
.amber { color: #d98b4e; }
.brown { color: #7d5236; }
.green { color: #1fae82; }
.flip { transform: scaleX(-1); }
.orange {
  color: #e5862b;
  --hole: #fff;
  --pupil: #2b5a86;
}

/* window title */
.titlebar {
  flex: none;
  display: flex;
  align-items: center;
  height: 22px;
  padding: 0 2px;
  background: #fff;
  color: #222;
}
.caption {
  flex: 1;
  margin-left: 4px;
  font-family: "Open Sans", sans-serif;
}
.winbtn {
  width: 43px;
  height: 22px;
  display: flex;
  align-items: center;
  justify-content: center;
}

/* top bar */
.topbar {
  flex: none;
  display: flex;
  align-items: center;
  height: 24px;
  padding: 0 7px 0 8px;
  background: #1c1c1c;
  border-top: 1px solid #333;
}
.logo {
  margin-right: 10px;
  color: #e0e0e0;
  --hole: #1c1c1c;
  --pupil: #e0e0e0;
}
.menus {
  display: flex;
  gap: 15px;
}
.workspaces {
  display: flex;
  align-self: flex-end;
  margin-left: 19px;
  color: #999;
}
.workspaces button {
  height: 20px;
  padding: 0 9px;
}
.workspaces .active {
  background: #303030;
  color: #fff;
  border-radius: 4px 4px 0 0;
}
.idblock {
  display: flex;
  flex: 0 0 180px;
  height: 19px;
  margin-left: 5px;
  border: 1px solid #383838;
  border-radius: 4px;
  overflow: hidden;
}
.workspaces + .idblock { margin-left: auto; }
.idblock input {
  flex: 1;
  padding-left: 7px;
}
.idblock button {
  display: flex;
  align-items: center;
  justify-content: center;
  gap: 1px;
  width: 18px;
}
.idblock .icon {
  width: 29px;
  background: #282828;
}
.idblock .light { background: #4a4a4a; }
.idblock .off { background: #282828; color: #666; }

/* editors */
.editors {
  flex: 1;
  min-height: 0;
  display: flex;
  gap: 3px;
  padding: 0 2px 0 1px;
}
.left {
  flex: 1;
  min-width: 0;
  display: flex;
  flex-direction: column;
  gap: 3px;
}
.right {
  flex: 0 0 204px;
  min-width: 0;
  display: flex;
  flex-direction: column;
  gap: 3px;
}
.w {
  display: flex;
  align-items: center;
  justify-content: center;
  height: 18px;
  min-width: 18px;
  background: #282828;
  border-radius: 3px;
}
.w.gray { background: #545454; }
.w.blue { background: #4772b3; }
.w.dim { background: #303030; }
.outlined { border: 1px solid #3a3a3a; }
.pair {
  width: 29px;
  gap: 1px;
}
.joined { display: flex; }
.joined > *:not(:last-child) {
  border-top-right-radius: 0;
  border-bottom-right-radius: 0;
}
.joined > *:not(:first-child) {
  border-top-left-radius: 0;
  border-bottom-left-radius: 0;
}

/* 3d viewport */
.viewport {
  flex: 1;
  min-height: 0;
  position: relative;
  display: flex;
  flex-direction: column;
  background: #393939;
  border-radius: 4px;
  overflow: hidden;
}
.floor {
  position: absolute;
  inset: 0;
  width: 100%;
  height: 100%;
}
.viewhead, .toolhead, .stage {
  position: relative;
  display: flex;
}
.viewhead {
  padding: 3px 7px 4px 8px;
}
.mode {
  width: 102px;
  margin-left: 6px;
  gap: 5px;
}
.view { margin-left: 13px; }
.group {
  display: flex;
  gap: 5px;
}
.transform { margin-left: 46px; }
.orient {
  width: 74px;
  gap: 4px;
}
.display { margin-left: auto; gap: 6px; }
.toolhead {
  justify-content: space-between;
  padding: 3px 5px 0 40px;
}
.options {
  width: 73px;
  gap: 7px;
}
.stage {
  flex: 1;
  align-items: flex-start;
  padding: 10px 0 0 7px;
}
.toolbar {
  display: flex;
  flex-direction: column;
  gap: 6px;
}
.tools {
  display: flex;
  flex-direction: column;
  border-radius: 4px;
  overflow: hidden;
}
.tools button {
  display: flex;
  align-items: center;
  justify-content: center;
  width: 38px;
  height: 32px;
  background: #262626;
}
.tools button + button { border-top: 1px solid #333; }
.tools .on { background: #4772b3; }
.corner {
  position: relative;
}
.corner::after {
  content: "";
  position: absolute;
  right: 2px;
  bottom: 2px;
  border: 2px solid;
  border-color: transparent #aaa #aaa transparent;
}
.viewinfo {
  flex: 1;
  margin-left: 17px;
  line-height: 17px;
  color: #fff;
}
.navigate {
  display: flex;
  flex-direction: column;
  align-items: flex-end;
}
.gizmo {
  width: 82px;
  height: 78px;
}
.axis {
  fill: #222;
  font-size: 10px;
  font-weight: bold;
  text-anchor: middle;
}
.navbtns {
  display: flex;
  flex-direction: column;
  gap: 2px;
  margin-right: 1px;
}
.navbtns button {
  display: flex;
  align-items: center;
  justify-content: center;
  width: 26px;
  height: 26px;
  border-radius: 50%;
  background: #262626;
}
.npanel {
  width: 7px;
  height: 15px;
  margin-top: 4px;
  background: #2c2c2c;
  border-radius: 3px 0 0 3px;
}

/* timeline */
.timeline {
  flex: none;
  height: 42px;
  background: #303030;
  border-radius: 4px;
  overflow: hidden;
}
.timehead {
  display: flex;
  padding: 3px 6px 3px 7px;
}
.playback {
  margin: 0 10px 0 6px;
}
.playback .w {
  gap: 4px;
  padding: 0 5px;
}
.range {
  width: 165px;
  margin-left: auto;
  gap: 1px;
}
.ruler {
  position: relative;
  display: flex;
  height: 18px;
  padding: 2px 30px 0 25px;
  background: #1d1d1d;
  color: #999;
}
.ruler span {
  flex: 0 0 74px;
  text-align: center;
}
.ruler .now {
  flex-basis: 22px;
  margin-right: 21px;
  background: #4772b3;
  border-radius: 4px;
  color: #fff;
}
.ruler .late { margin-left: auto; }
.scroll {
  position: absolute;
  left: 7px;
  right: 6px;
  bottom: 1px;
  height: 9px;
  border-radius: 5px;
  background: #545454;
}
.scroll::before, .scroll::after {
  content: "";
  position: absolute;
  top: 1px;
  left: 1px;
  width: 7px;
  height: 7px;
  border-radius: 50%;
  background: #242424;
}
.scroll::after { left: auto; right: 1px; }

/* outliner */
.outliner {
  flex: none;
  height: 183px;
  background: #282828;
  border-radius: 4px;
  overflow: hidden;
}
.sidehead {
  display: flex;
  gap: 6px;
  height: 25px;
  padding: 3px 9px 4px 7px;
}
.find {
  flex: 1;
  display: flex;
  align-items: center;
  min-width: 0;
  height: 18px;
  margin-left: 9px;
  padding-left: 3px;
  border: 1px solid #333;
  border-radius: 4px;
  background: #1d1d1d;
}
.find input {
  flex: 1;
  width: 0;
}
.tree {
  list-style: none;
  margin: 0;
  padding: 0;
  position: relative;
}
.tree::before {
  content: "";
  position: absolute;
  left: 27px;
  top: 40px;
  height: 68px;
  border-left: 1px solid #555;
}
.tree li {
  display: flex;
  align-items: center;
  height: 19px;
  padding: 0 8px 0 21px;
}
.tree li:nth-child(even) { background: #2b2b2b; }
.tree .root svg { margin-right: 6px; }
.tree .child { padding-left: 43px; }
.tree .coll { padding-left: 24px; }
.tree b {
  display: flex;
  align-items: center;
  justify-content: center;
  width: 18px;
  height: 17px;
  margin: 0 4px 0 8px;
}
.tree .chip {
  background: rgba(255, 255, 255, .25);
  border-radius: 4px;
}
.tree em {
  display: flex;
  align-items: center;
  gap: 5px;
  margin-left: auto;
  color: #eee;
}
.tree .data { margin-left: 20px; }
.tree .cut { margin-left: 12px; }
.tree li.selected {
  background: #334d80;
}
.selected span { color: #e8ab6c; }
.selected .chip .amber { color: #dfa27f; }
.tree .muted { color: #7a7a7a; }
.tri {
  border: 3px solid transparent;
  border-left: 5px solid #999;
  border-right: 0;
}
.tri.open {
  border: 3px solid transparent;
  border-top: 6px solid #ddd;
  border-bottom: 0;
}

/* properties */
.properties {
  flex: 1;
  min-height: 0;
  display: flex;
  flex-direction: column;
  background: #303030;
  border-radius: 4px;
  overflow: hidden;
}
.props {
  flex: none;
  gap: 15px;
  height: 24px;
  padding: 3px 4px 3px 8px;
}
.props .find { margin-left: 6px; }
.propbody {
  flex: 1;
  min-height: 0;
  display: flex;
}
.tabs {
  flex: 0 0 26px;
  background: #1c1c1c;
  padding-top: 6px;
}
.tabs button {
  display: flex;
  align-items: center;
  justify-content: center;
  width: 26px;
  height: 26px;
}
.tabs .gap { margin-top: 7px; }
.tabs .gap2 { margin-top: 10px; }
.tabs .current {
  background: #303030;
  border-radius: 4px 0 0 4px;
}
.objtab {
  color: #9c6234;
  --fill: #d98b4e;
}
.content {
  flex: 1;
  min-width: 0;
  padding: 7px 6px 0 8px;
}
.crumb {
  display: flex;
  align-items: center;
  gap: 8px;
  height: 20px;
  padding: 0 2px;
}
.crumb .i10 { margin: 0 3px; }
.crumb .pin { margin-left: auto; }
.drop {
  position: relative;
  flex: 1;
  height: 18px;
  background: #282828;
  border: 1px solid #3a3a3a;
  border-radius: 4px;
}
.drop select {
  appearance: none;
  display: block;
  width: 100%;
  height: 16px;
  line-height: 16px;
  padding-left: 6px;
}
.drop svg {
  position: absolute;
  right: 2px;
  top: 5px;
  pointer-events: none;
}
.add { margin-top: 14px; }
.panel {
  margin-top: 9px;
  padding-bottom: 20px;
  background: #3d3d3d;
  border: 1px solid #3f5d8f;
  border-radius: 4px;
}
.panelhead {
  display: flex;
  align-items: center;
  height: 24px;
  margin-bottom: 6px;
  padding: 0 6px 0 5px;
}
.kind { margin: 0 10px 0 5px; }
.flags .w {
  width: 15px;
  min-width: 15px;
}
.render { --lens: #4772b3; }
.cage { --node: #545454; }
.plain { margin-left: 5px; }
.grip {
  width: 10px;
  height: 4px;
  margin-left: auto;
}
.prow {
  display: grid;
  grid-template-columns: 55px 74px 1fr;
  column-gap: 8px;
  height: 18px;
  margin-bottom: 5px;
}
.prow > :first-child {
  text-align: right;
  white-space: nowrap;
}
.prow .dot {
  width: 4px;
  height: 4px;
  margin-top: 7px;
  border-radius: 50%;
  background: #ddd;
}
.prow .drop { border: 0; }
.prow select { height: 18px; }
.num {
  width: 100%;
  height: 18px;
  text-align: center;
  background: #545454;
  border-radius: 4px;
}
.num.hot { background: #4772b3; }
.prow.muted { color: #888; }
.prow.muted .num { background: #474747; }
.prow.muted .dot { background: #777; }
.vgroup { margin-top: 14px; }
.vg {
  display: flex;
  align-items: center;
  padding-left: 3px;
  background: #1d1d1d;
  border-radius: 4px;
  overflow: hidden;
}
.vg input {
  flex: 1;
  width: 0;
}
.vg button {
  display: flex;
  align-items: center;
  height: 18px;
  padding: 0 2px;
  background: #4a4a4a;
}
.subs {
  display: flex;
  flex-direction: column;
  gap: 5px;
  margin: 10px 0 0 19px;
}
.subs button {
  display: flex;
  align-items: center;
  gap: 4px;
}

/* status bar */
.statusbar {
  flex: none;
  display: flex;
  align-items: center;
  height: 20px;
  padding: 0 8px 0 9px;
  color: #999;
}
.hint {
  display: flex;
  align-items: center;
  gap: 9px;
}
.drag { margin-left: 9px; gap: 2px; }
.wave { width: 4px; height: 14px; margin-right: 3px; }
.rotate { margin-left: 82px; }
.context { margin-left: 136px; }
.version { margin-left: auto; }

/* operator popup */
.popup {
  position: absolute;
  left: 250px;
  top: 105px;
  width: 573px;
  display: flex;
  flex-direction: column;
  gap: 4px;
  padding: 6px 5px 5px 6px;
  background: #181818;
  border-radius: 5px;
  box-shadow: 0 0 3px rgba(0, 0, 0, .5);
}
.popup h1, .popup h2 {
  margin: 0;
  font-size: 10px;
  font-weight: normal;
}
.popup h1 {
  padding: 0 1px 1px;
  color: #999;
}
.preset { margin-bottom: 1px; }
.preset button {
  display: flex;
  align-items: center;
  justify-content: center;
  width: 19px;
  height: 18px;
  background: #545454;
  border-left: 1px solid #444;
}
.preset button:last-child { border-radius: 0 4px 4px 0; }
fieldset {
  display: flex;
  flex-direction: column;
  gap: 3px;
  min-width: 0;
  margin: 0;
  padding: 4px 4px 3px 3px;
  border: 1px solid #2e2e2e;
  border-radius: 4px;
  background: #1b1b1b;
}
.popup h2, .line > span, .line > label:not(.field) { padding-left: 1px; }
.seg {
  flex: 1;
  display: flex;
  gap: 1px;
  border-radius: 4px;
  overflow: hidden;
  background: #3c3c3c;
}
.seg > * {
  flex: 1 1 0;
  height: 18px;
  background: #545454;
  text-align: center;
}
.seg .field { border-radius: 0; }
.seg .on, .ok {
  background: #4772b3;
  color: #f0f0f0;
}
u {
  text-underline-offset: 2px;
}
.cols {
  display: grid;
  grid-template-columns: 1fr 1fr;
  gap: 3px 8px;
}
.four { grid-template-columns: repeat(4, 1fr); }
.three { grid-template-columns: repeat(3, 1fr); column-gap: 0; }
.field {
  flex: 1;
  display: flex;
  min-width: 0;
  height: 18px;
  padding: 0 13px 0 15px;
  background: #545454;
  border-radius: 4px;
}
.field span { white-space: nowrap; }
.field input {
  flex: 1;
  width: 0;
  text-align: right;
}
.line {
  display: grid;
}
.quarter { grid-template-columns: 1fr 3fr; }
.random {
  grid-template-columns: 1fr 5fr;
  column-gap: 8px;
}
.mass { grid-template-columns: 78px 1fr; }
.halves {
  display: grid;
  grid-template-columns: 1fr 1fr;
}
.check {
  display: flex;
  align-items: center;
  gap: 3px;
  height: 18px;
  color: #fff;
  white-space: nowrap;
}
.check:has(input:not(:checked)) { color: #8c8c8c; }
.prow .check:has(input) { color: #dcdcdc; }
.check input {
  appearance: none;
  display: grid;
  place-content: center;
  width: 13px;
  height: 13px;
  background: #545454;
  border-radius: 2px;
}
.check input:checked { background: #4772b3; }
.check input:checked::before {
  content: "";
  width: 5px;
  height: 8px;
  border: solid #fff;
  border-width: 0 2px 2px 0;
  transform: translateY(-1px) rotate(40deg);
}
.text {
  height: 19px;
  padding-left: 7px;
  background: #1b1b1b;
  border: 1px solid #333;
  border-radius: 4px;
}
.ok {
  height: 18px;
  margin-top: 1px;
  border-radius: 3px;
}
.marks {
  position: absolute;
  inset: 0;
  width: 100%;
  height: 100%;
  pointer-events: none;
  fill: none;
  stroke: #d6232a;
  stroke-width: 4;
  stroke-linecap: round;
  stroke-linejoin: round;
}

/* windows taskbar */
.taskbar {
  flex: none;
  display: flex;
  height: 37px;
  background: linear-gradient(90deg, #dee8cf, #e2e1d8 30%, #e5d7d6 50%, #e7d7d5 85%, #ecdfd4);
  color: #222;
  font-family: "Open Sans", "Noto Sans CJK JP", sans-serif;
}
.start {
  width: 45px;
  display: flex;
  align-items: center;
  justify-content: center;
}
.winsearch {
  flex: 0 1 322px;
  display: flex;
  align-items: center;
  gap: 8px;
  padding-left: 9px;
  background: #fff;
  border: 1px solid #ccc;
  font-size: 12px;
}
.winsearch input { flex: 1; }
.winsearch input::placeholder { color: #333; opacity: 1; }
.apps { display: flex; }
.apps button {
  width: 47px;
  display: flex;
  align-items: center;
  justify-content: center;
  position: relative;
}
.run::after {
  content: "";
  position: absolute;
  left: 4px;
  right: 4px;
  bottom: 0;
  height: 2px;
  background: #1a75c0;
}
.focus { background: #f7f1ef; }
.focus::after { left: 0; right: 0; }
.line-logo {
  font-size: 4px;
  font-weight: bold;
  fill: #13a945;
  text-anchor: middle;
}
.tray {
  display: flex;
  align-items: center;
  gap: 6px;
  margin-left: auto;
  padding-right: 13px;
}
.battery {
  width: 46px;
  height: 20px;
  border: 2px solid #fff;
  background: #1c9648;
  color: #fff;
  font-size: 12px;
  line-height: 16px;
  text-align: center;
}
.ime { font-size: 16px; }
.clock {
  margin-left: 6px;
  font-size: 11px;
  line-height: 17px;
  text-align: center;
}
.notice {
  position: relative;
  margin-left: 12px;
  margin-right: 2px;
}
.notice b {
  position: absolute;
  left: 11px;
  top: 10px;
  width: 15px;
  height: 15px;
  border: 1px solid #999;
  border-radius: 50%;
  background: #ddd8d5;
  font-size: 10px;
  line-height: 13px;
}
```
FILE: script.js
```js
const grid = document.getElementById('grid');
const horizon = 139;

function addLine(x1, y1, x2, y2, color) {
  const line = document.createElementNS('http://www.w3.org/2000/svg', 'line');
  line.setAttribute('x1', x1);
  line.setAttribute('y1', y1);
  line.setAttribute('x2', x2);
  line.setAttribute('y2', y2);
  line.setAttribute('stroke', color);
  grid.appendChild(line);
}

// lines that run towards the right vanishing point
for (let k = -6; k < 40; k++) {
  const depth = 1 / (0.00395 + 0.00048 * k);
  addLine(47 - 3753 * 0.5, horizon + depth * 1.5, 3800, horizon, k === 0 ? '#56723a' : '#454545');
}

// lines that run towards the near vanishing point
for (let k = -40; k < 45; k++) {
  const x = 170 + 103 * k;
  addLine(339, horizon, 339 + (x - 339) * 4, horizon + 280 * 4, k === 5 ? '#8a3a42' : '#454545');
}
```
